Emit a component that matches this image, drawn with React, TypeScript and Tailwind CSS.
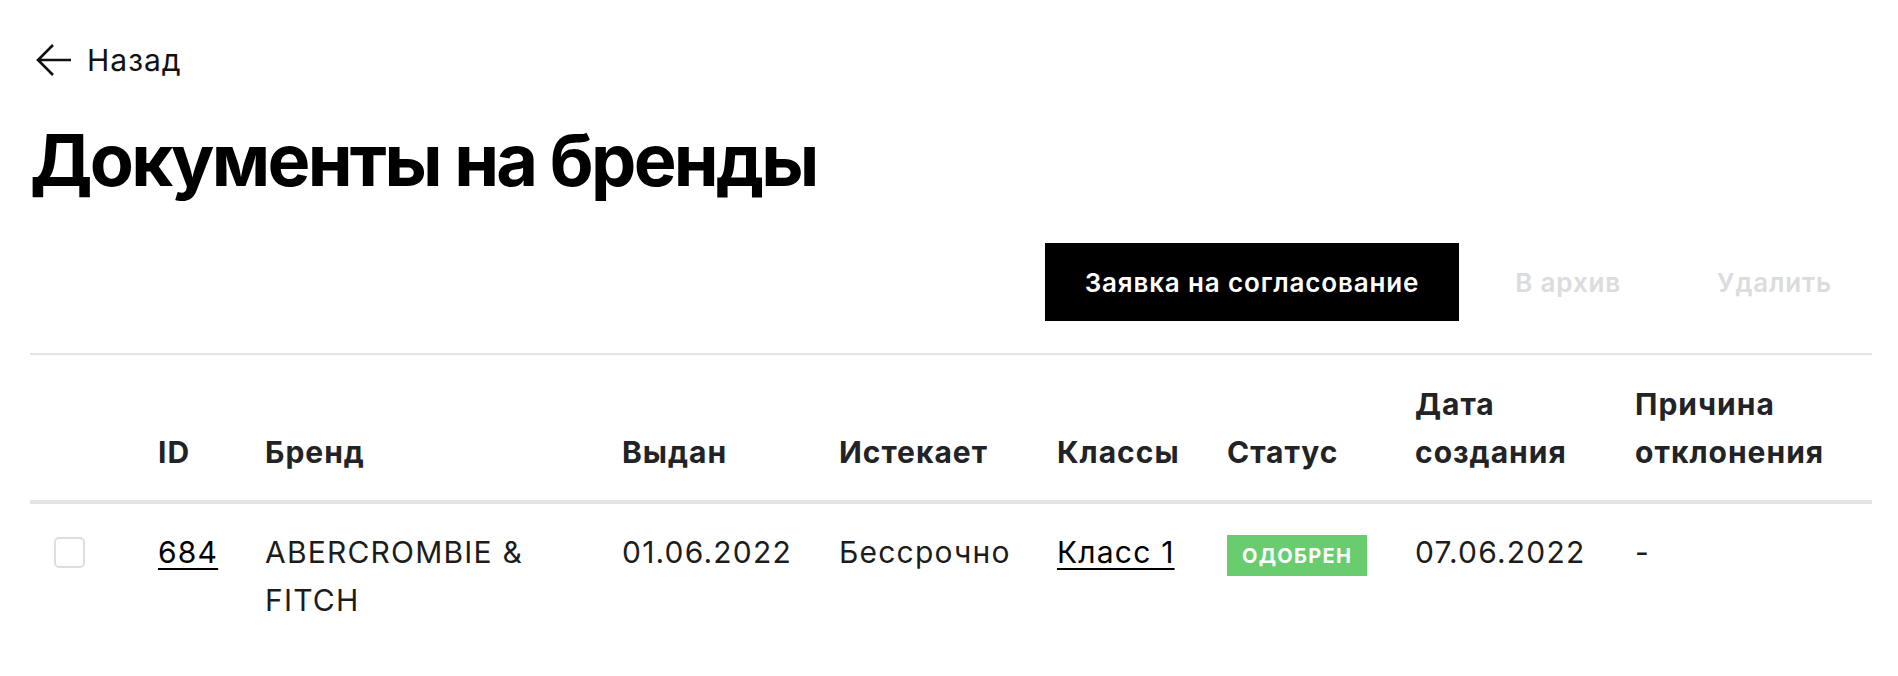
import React from "react";

const columns = [
  { key: "check", width: 104 },
  { key: "id", width: 107 },
  { key: "brand", width: 357 },
  { key: "issued", width: 217 },
  { key: "expires", width: 218 },
  { key: "classes", width: 170 },
  { key: "status", width: 188 },
  { key: "created", width: 220 },
  { key: "reason", width: 261 },
];

function BackArrow() {
  return (
    <svg width="36" height="34" viewBox="0 0 36 34" fill="none">
      <path
        d="M35 17H2.5M17 2L2 17l15 15"
        stroke="#111"
        strokeWidth="2.6"
        strokeLinecap="butt"
        strokeLinejoin="miter"
      />
    </svg>
  );
}

export default function App() {
  const th =
    "pl-[24px] pt-[25px] pb-[24px] text-left align-bottom font-bold text-[30px] leading-[48px] tracking-[1px] text-[#222326]";
  const td =
    "pl-[24px] pt-[24px] pb-[24px] align-top text-[30px] leading-[48px] tracking-[1.2px] text-[#1c1c1c]";

  return (
    <div
      className="min-h-[676px] bg-white pl-[30px] pr-[26px] text-black"
      style={{ fontFamily: "Inter, 'Liberation Sans', sans-serif" }}
    >
      {/* Back link */}
      <div className="ml-[6px] flex items-center gap-[15px] pt-[43px]">
        <BackArrow />
        <span className="text-[30px] leading-[34px] tracking-[1px] text-[#111]">Назад</span>
      </div>

      {/* Title */}
      <h1 className="mt-[47px] text-[72px] font-bold leading-[72px] tracking-[-2.7px]">
        Документы на бренды
      </h1>

      {/* Actions */}
      <div className="mt-[47px] flex justify-end gap-[16px]">
        <button className="h-[78px] bg-black px-[40px] text-[26px] font-semibold tracking-[0.85px] text-white">
          Заявка на согласование
        </button>
        <button className="h-[78px] px-[40px] text-[26px] font-semibold tracking-[0.85px] text-[#dcdcdc]">
          В архив
        </button>
        <button className="h-[78px] px-[40px] text-[26px] font-semibold tracking-[0.85px] text-[#dcdcdc]">
          Удалить
        </button>
      </div>

      <div className="mt-[32px] h-[2px] bg-[#e2e4e9]" />

      {/* Table */}
      <table className="w-full table-fixed border-collapse">
        <colgroup>
          {columns.map((c) => (
            <col key={c.key} style={{ width: c.width }} />
          ))}
        </colgroup>
        <thead>
          <tr className="border-b-[4px] border-[#e2e4e9]">
            <th className={th}></th>
            <th className={th}>ID</th>
            <th className={th}>Бренд</th>
            <th className={th}>Выдан</th>
            <th className={th}>Истекает</th>
            <th className={th}>Классы</th>
            <th className={th}>Статус</th>
            <th className={th}>
              Дата
              <br />
              создания
            </th>
            <th className={th}>
              Причина
              <br />
              отклонения
            </th>
          </tr>
        </thead>
        <tbody>
          <tr>
            <td className={td}>
              <div className="mt-[9px] h-[31px] w-[31px] rounded-[5px] border-2 border-[#dedede] bg-white" />
            </td>
            <td className={td}>
              <a className="text-black underline decoration-2 underline-offset-[5px]">684</a>
            </td>
            <td className={td}>
              ABERCROMBIE &amp;
              <br />
              FITCH
            </td>
            <td className={td}>01.06.2022</td>
            <td className={td}>Бессрочно</td>
            <td className={td}>
              <a className="text-black underline decoration-2 underline-offset-[5px]">Класс 1</a>
            </td>
            <td className={td}>
              <span className="mt-[7px] inline-flex h-[41px] items-center bg-[#69cc6f] px-[15px] align-top text-[20px] font-bold uppercase leading-none tracking-[1.3px] text-white">
                Одобрен
              </span>
            </td>
            <td className={td}>07.06.2022</td>
            <td className={td}>-</td>
          </tr>
        </tbody>
      </table>
    </div>
  );
}
